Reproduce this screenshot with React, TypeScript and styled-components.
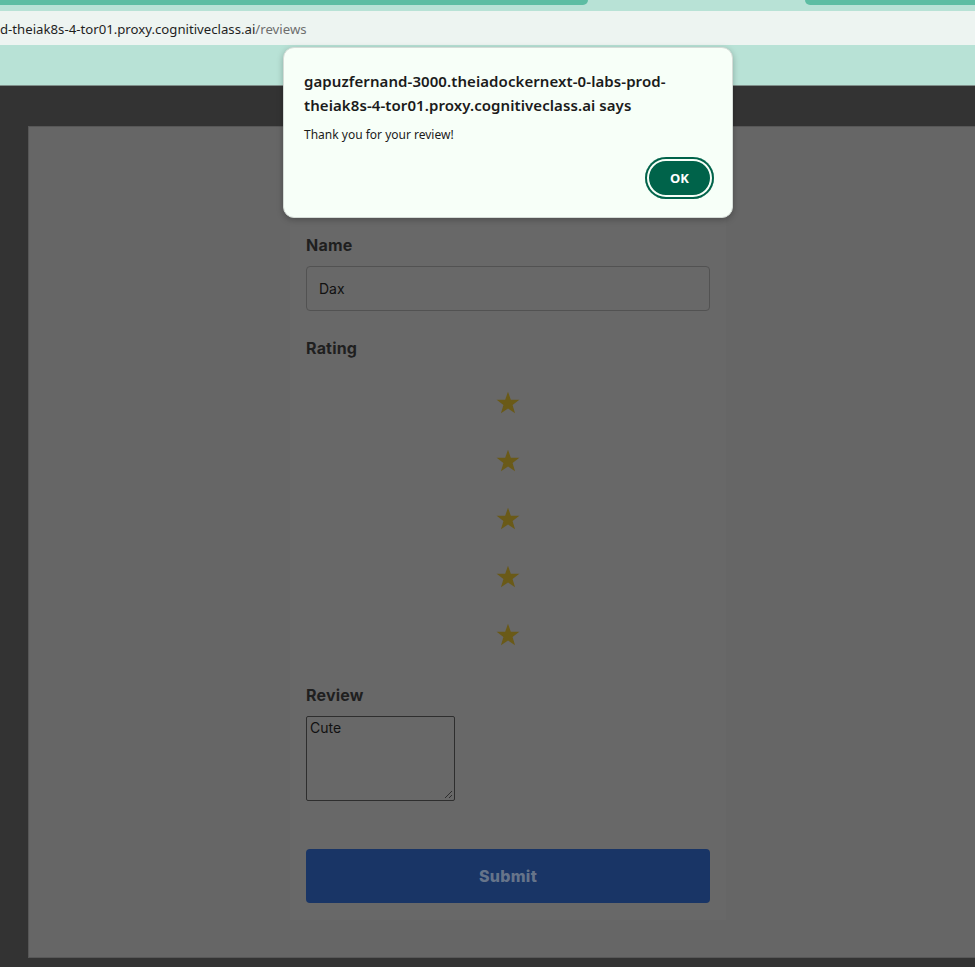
import React from "react";
import styled, { createGlobalStyle } from "styled-components";

const GlobalStyle = createGlobalStyle`
  html, body {
    margin: 0;
    padding: 0;
    background: #333333;
    overflow: hidden;
  }
  * { box-sizing: border-box; }
`;

const Browser = styled.div`
  position: relative;
  width: 975px;
  height: 967px;
  overflow: hidden;
  font-family: "Noto Sans", "Open Sans", sans-serif;
`;

const TabStrip = styled.div`
  height: 11px;
  background: #b8e2d6;
  display: flex;
  justify-content: space-between;
`;

const Tab = styled.div<{ $side: "left" | "right"; $w: number }>`
  width: ${(p) => p.$w}px;
  height: 5px;
  background: #5dbda3;
  border-bottom-left-radius: ${(p) => (p.$side === "right" ? "6px" : "0")};
  border-bottom-right-radius: ${(p) => (p.$side === "left" ? "6px" : "0")};
`;

const AddressBar = styled.div`
  height: 34px;
  background: #edf4f1;
  display: flex;
  align-items: center;
  padding-top: 1px;
`;

const Url = styled.span`
  font-size: 13.2px;
  color: #1f1f1f;
  white-space: nowrap;
`;

const UrlPath = styled.span`
  color: #6e6e6e;
`;

const Toolbar = styled.div`
  height: 41px;
  background: #b8e2d6;
  border-bottom: 1px solid #7f8f8a;
`;

const Page = styled.div`
  height: 881px;
  background: #333333;
  padding: 40px 0 0 28px;
`;

const Card = styled.div`
  width: 960px;
  height: 832px;
  background: #666666;
  border: 1px solid #575757;
  display: flex;
  justify-content: center;
  align-items: flex-end;
  padding-bottom: 37px;
`;

const Form = styled.form`
  width: 436px;
  background: #686868;
  padding: 43px 16px 17px;
  display: flex;
  flex-direction: column;
  font-family: Inter, "Lato", sans-serif;
`;

const Label = styled.label<{ $gap: number }>`
  display: block;
  font-size: 16px;
  font-weight: 700;
  line-height: 24px;
  letter-spacing: 0.2px;
  color: #1f1f1f;
  margin-top: ${(p) => p.$gap}px;
  margin-bottom: 9px;
`;

const TextInput = styled.div`
  height: 45px;
  border: 1px solid #525252;
  border-radius: 4px;
  padding: 0 12px;
  display: flex;
  align-items: center;
  font-size: 14px;
  color: #111111;
`;

const Stars = styled.div`
  display: flex;
  flex-direction: column;
  align-items: center;
  margin-top: 5px;
`;

const StarCell = styled.div`
  height: 58px;
  display: flex;
  align-items: center;
  justify-content: center;
`;

const TextArea = styled.div`
  width: 149px;
  height: 85px;
  border: 1px solid #2e2e2e;
  border-radius: 2px;
  padding: 2px 3px;
  font-size: 14px;
  line-height: 18px;
  color: #111111;
  position: relative;
`;

const Grip = styled.svg`
  position: absolute;
  right: 1px;
  bottom: 1px;
`;

const Submit = styled.div`
  margin-top: 48px;
  height: 54px;
  border-radius: 4px;
  background: #193566;
  color: #66748a;
  font-size: 16px;
  font-weight: 800;
  letter-spacing: 0.3px;
  display: flex;
  align-items: center;
  justify-content: center;
`;

const Dialog = styled.div`
  position: absolute;
  left: 283px;
  top: 47px;
  width: 450px;
  height: 171px;
  background: #f7fff8;
  border: 1px solid #d5dcd7;
  border-radius: 11px;
  box-shadow: 0 2px 6px rgba(0, 0, 0, 0.25);
  padding: 21px 18px 0 20px;
  display: flex;
  flex-direction: column;
  font-family: "Noto Sans", "Open Sans", sans-serif;
`;

const DialogTitle = styled.div`
  font-size: 15px;
  font-weight: 600;
  line-height: 24px;
  letter-spacing: 0.08px;
  color: #1b1b1b;
`;

const DialogMessage = styled.div`
  margin-top: 10px;
  font-size: 12px;
  line-height: 16px;
  color: #1b1b1b;
`;

const DialogActions = styled.div`
  margin-top: 14px;
  display: flex;
  justify-content: flex-end;
`;

const OkButton = styled.div`
  width: 69px;
  height: 42px;
  border-radius: 21px;
  background: #00634a;
  box-shadow: inset 0 0 0 2px #00634a, inset 0 0 0 4px #f7fff8;
  color: #ffffff;
  font-size: 13px;
  font-weight: 700;
  display: flex;
  align-items: center;
  justify-content: center;
`;

const Star = () => (
  <svg width="26" height="26" viewBox="0 0 24 24">
    <polygon
      points="12,1.5 14.6,9 22.5,9.1 16.2,13.9 18.5,21.5 12,17 5.5,21.5 7.8,13.9 1.5,9.1 9.4,9"
      fill="#6a5a18"
    />
  </svg>
);

export default function App() {
  return (
    <>
      <GlobalStyle />
      <Browser>
        <TabStrip>
          <Tab $side="left" $w={588} />
          <Tab $side="right" $w={170} />
        </TabStrip>
        <AddressBar>
          <Url>
            d-theiak8s-4-tor01.proxy.cognitiveclass.ai<UrlPath>/reviews</UrlPath>
          </Url>
        </AddressBar>
        <Toolbar />
        <Page>
          <Card>
            <Form>
              <Label $gap={0}>Name</Label>
              <TextInput>Dax</TextInput>
              <Label $gap={25}>Rating</Label>
              <Stars>
                {[0, 1, 2, 3, 4].map((i) => (
                  <StarCell key={i}>
                    <Star />
                  </StarCell>
                ))}
              </Stars>
              <Label $gap={19}>Review</Label>
              <TextArea>
                Cute
                <Grip width="9" height="9" viewBox="0 0 9 9">
                  <line x1="8" y1="1" x2="1" y2="8" stroke="#2e2e2e" strokeWidth="1" />
                  <line x1="8" y1="5" x2="5" y2="8" stroke="#2e2e2e" strokeWidth="1" />
                </Grip>
              </TextArea>
              <Submit>Submit</Submit>
            </Form>
          </Card>
        </Page>
        <Dialog>
          <DialogTitle>
            gapuzfernand-3000.theiadockernext-0-labs-prod-
            <br />
            theiak8s-4-tor01.proxy.cognitiveclass.ai says
          </DialogTitle>
          <DialogMessage>Thank you for your review!</DialogMessage>
          <DialogActions>
            <OkButton>OK</OkButton>
          </DialogActions>
        </Dialog>
      </Browser>
    </>
  );
}
